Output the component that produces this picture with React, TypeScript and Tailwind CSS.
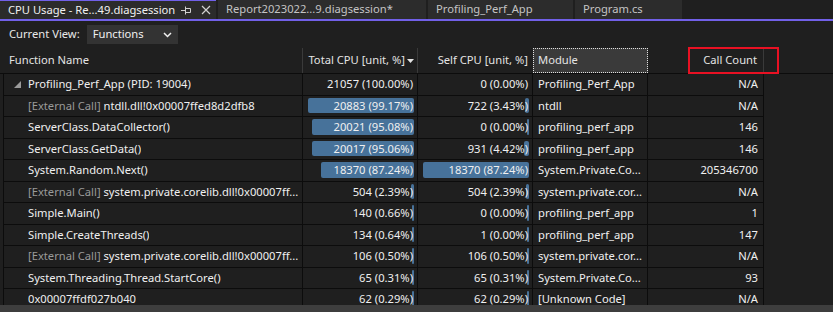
import React from 'react';

type Row = {
    ext?: boolean;
    name: string;
    total: string;
    totalVal: number;
    self: string;
    selfVal: number;
    module: string;
    calls: string;
    root?: boolean;
};

const rows: Row[] = [
    { root: true, name: 'Profiling_Perf_App (PID: 19004)', total: '21057 (100.00%)', totalVal: 21057, self: '0 (0.00%)', selfVal: 0, module: 'Profiling_Perf_App', calls: 'N/A' },
    { ext: true, name: 'ntdll.dll!0x00007ffed8d2dfb8', total: '20883 (99.17%)', totalVal: 20883, self: '722 (3.43%)', selfVal: 722, module: 'ntdll', calls: 'N/A' },
    { name: 'ServerClass.DataCollector()', total: '20021 (95.08%)', totalVal: 20021, self: '0 (0.00%)', selfVal: 0, module: 'profiling_perf_app', calls: '146' },
    { name: 'ServerClass.GetData()', total: '20017 (95.06%)', totalVal: 20017, self: '931 (4.42%)', selfVal: 931, module: 'profiling_perf_app', calls: '146' },
    { name: 'System.Random.Next()', total: '18370 (87.24%)', totalVal: 18370, self: '18370 (87.24%)', selfVal: 18370, module: 'System.Private.Co...', calls: '205346700' },
    { ext: true, name: 'system.private.corelib.dll!0x00007ff...', total: '504 (2.39%)', totalVal: 504, self: '504 (2.39%)', selfVal: 504, module: 'system.private.cor...', calls: 'N/A' },
    { name: 'Simple.Main()', total: '140 (0.66%)', totalVal: 140, self: '0 (0.00%)', selfVal: 0, module: 'profiling_perf_app', calls: '1' },
    { name: 'Simple.CreateThreads()', total: '134 (0.64%)', totalVal: 134, self: '1 (0.00%)', selfVal: 1, module: 'profiling_perf_app', calls: '147' },
    { ext: true, name: 'system.private.corelib.dll!0x00007ff...', total: '106 (0.50%)', totalVal: 106, self: '106 (0.50%)', selfVal: 106, module: 'system.private.cor...', calls: 'N/A' },
    { name: 'System.Threading.Thread.StartCore()', total: '65 (0.31%)', totalVal: 65, self: '65 (0.31%)', selfVal: 65, module: 'System.Private.Co...', calls: '93' },
    { name: '0x00007ffdf027b040', total: '62 (0.29%)', totalVal: 62, self: '62 (0.29%)', selfVal: 62, module: '[Unknown Code]', calls: 'N/A' },
];

const BAR_MAX = 106;

function BarCell({ text, value, max, show }: { text: string; value: number; max: number; show: boolean }) {
    const w = show ? Math.max(2, (value / max) * BAR_MAX) : 0;
    return (
        <div className="relative flex h-full w-[115px] shrink-0 items-center justify-end border-r border-[#0c0c0c] pr-[4px]">
            {w > 0 && (
                <div
                    className="absolute top-[2px] right-[3px] bottom-[3px] rounded-[2px] bg-[#47729a]"
                    style={{ width: w }}
                />
            )}
            <span className="relative whitespace-nowrap">{text}</span>
        </div>
    );
}

function Tab({ label, active, width }: { label: string; active?: boolean; width: string }) {
    return (
        <div
            className={`flex h-[19px] shrink-0 items-center pl-[8px] ${width} ${
                active ? 'border-t border-[#7160e8] bg-[#2b2b2b] text-[#f0f0f0]' : 'bg-[#2c2c2c] text-[#c4c4c4]'
            }`}
        >
            <span className="whitespace-nowrap">{label}</span>
            {active && (
                <div className="ml-auto flex items-center gap-[9px] pr-[5px]">
                    <svg width="11" height="10" viewBox="0 0 11 10" className="text-[#d0d0d0]">
                        <path d="M0 5.5H4M4.5 1.5V9.5M4.5 3.5H9.5V7.5H4.5" stroke="currentColor" fill="none" strokeWidth="1" />
                    </svg>
                    <svg width="10" height="10" viewBox="0 0 10 10" className="text-[#d0d0d0]">
                        <path d="M1 1L9 9M9 1L1 9" stroke="currentColor" strokeWidth="1.2" />
                    </svg>
                </div>
            )}
        </div>
    );
}

export default function App() {
    const maxTotal = 20883;
    const maxSelf = 18370;

    return (
        <div
            className="flex h-[312px] w-[833px] flex-col overflow-hidden bg-[#1f1f1f] text-[11.2px] text-[#f0f0f0]"
            style={{ fontFamily: '"Noto Sans", "Open Sans", sans-serif' }}
        >
            {/* Tab strip */}
            <div className="flex h-[19px] shrink-0 items-start gap-[2px]">
                <Tab label="CPU Usage - Re...49.diagsession" active width="w-[216px]" />
                <Tab label="Report2023022...9.diagsession*" width="w-[208px]" />
                <Tab label="Profiling_Perf_App" width="w-[145px]" />
                <Tab label="Program.cs" width="w-[107px]" />
            </div>
            <div className="h-[2px] shrink-0 bg-[#7160e8]" />

            {/* Toolbar */}
            <div className="flex h-[27px] shrink-0 items-center pl-[9px]">
                <span className="text-[#e8e8e8]">Current View:</span>
                <div className="ml-[7px] flex h-[19px] w-[91px] items-center justify-between bg-[#333333] pr-[6px] pl-[6px]">
                    <span>Functions</span>
                    <svg width="9" height="6" viewBox="0 0 9 6">
                        <path d="M1 1L4.5 4.5L8 1" stroke="#f0f0f0" strokeWidth="1.5" fill="none" />
                    </svg>
                </div>
            </div>

            {/* Header */}
            <div className="relative flex h-[26px] shrink-0 items-center border-b border-[#0c0c0c] pl-[3px] text-[#e4e4e4]">
                <div className="flex h-full w-[300px] shrink-0 items-center border-r border-[#3a3a3a] pl-[6px]">Function Name</div>
                <div className="flex h-full w-[115px] shrink-0 items-center justify-end gap-[2px] border-r border-[#3a3a3a] pr-[3px] whitespace-nowrap">
                    <span>Total CPU [unit, %]</span>
                    <svg width="7" height="4" viewBox="0 0 7 4">
                        <path d="M0 0H7L3.5 4Z" fill="#e4e4e4" />
                    </svg>
                </div>
                <div className="flex h-full w-[115px] shrink-0 items-center justify-end pr-[5px] whitespace-nowrap">Self CPU [unit, %]</div>
                <div className="flex h-full w-[115px] shrink-0 items-center border border-dotted border-[#e0e0e0] bg-[#3a3a3a] pl-[4px]">Module</div>
                <div className="flex h-full w-[116px] shrink-0 items-center justify-end border-r border-[#3a3a3a] pr-[6px]">Call Count</div>
                <div className="absolute top-[-1px] left-[688px] h-[27px] w-[91px] border-2 border-[#e81123]" />
            </div>

            {/* Rows */}
            <div className="ml-[3px] min-h-0 w-[761px] flex-1 overflow-hidden border-l border-[#0c0c0c]">
                {rows.map((r, i) => (
                    <div key={i} className="flex h-[21.5px] items-center border-b border-[#0c0c0c] leading-[14px]">
                        <div className="flex h-full w-[299px] shrink-0 items-center border-r border-[#0c0c0c]">
                            <div className="flex w-[24px] shrink-0 justify-center pl-[2px]">
                                {r.root && (
                                    <svg width="7" height="7" viewBox="0 0 7 7">
                                        <path d="M7 0V7H0Z" fill="#9a9a9a" />
                                    </svg>
                                )}
                            </div>
                            <span className="truncate whitespace-nowrap">
                                {r.ext && <span className="text-[#9a9a9a]">[External Call] </span>}
                                {r.name}
                            </span>
                        </div>
                        <BarCell text={r.total} value={r.totalVal} max={maxTotal} show={!r.root} />
                        <BarCell text={r.self} value={r.selfVal} max={maxSelf} show={!r.root} />
                        <div className="flex h-full w-[115px] shrink-0 items-center border-r border-[#0c0c0c] pl-[5px] whitespace-nowrap">
                            {r.module}
                        </div>
                        <div className="flex h-full w-[116px] shrink-0 items-center justify-end border-r border-[#0c0c0c] pr-[5px]">
                            {r.calls}
                        </div>
                    </div>
                ))}
            </div>

            {/* Horizontal scrollbar */}
            <div className="h-[7px] shrink-0 bg-[#3e3e3e]" />
        </div>
    );
}
